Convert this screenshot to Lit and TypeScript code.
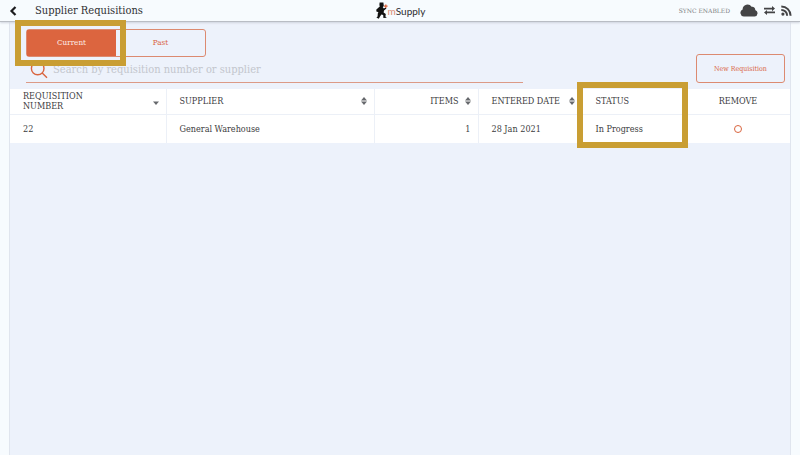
import { LitElement, html, svg, css } from "lit";
import { customElement, state } from "lit/decorators.js";

interface Column {
  key: string;
  label: string;
  sort?: "both" | "down";
}

const COLUMNS: Column[] = [
  { key: "number", label: "REQUISITION NUMBER", sort: "down" },
  { key: "supplier", label: "SUPPLIER", sort: "both" },
  { key: "items", label: "ITEMS", sort: "both" },
  { key: "entered", label: "ENTERED DATE", sort: "both" },
  { key: "status", label: "STATUS" },
  { key: "remove", label: "REMOVE" },
];

const ROWS = [
  { number: "22", supplier: "General Warehouse", items: "1", entered: "28 Jan 2021", status: "In Progress" },
];

const sortIcon = (kind: "both" | "down") => html`
  <svg class="sort-icon" viewBox="0 0 6 10" aria-hidden="true">
    ${kind === "both" ? svg`<path d="M3 1 L6 4.4 H0 Z" />` : null}
    <path d="M3 9 L6 5.6 H0 Z" />
  </svg>
`;

@customElement("app-root")
export class AppRoot extends LitElement {
  @state() private tab = "Current";

  static styles = css`
    :host {
      display: flex;
      flex-direction: column;
      min-height: 100vh;
      background: #f7fbfe;
      color: #3c3c3e;
      font-family: "DejaVu Serif Condensed", "DejaVu Serif", serif;
      font-size: 9px;
      line-height: 10px;
    }
    * {
      box-sizing: border-box;
    }
    button {
      font: inherit;
      color: inherit;
      background: none;
      border: 0;
      padding: 0;
      cursor: pointer;
    }
    svg {
      display: block;
      flex: none;
    }
    .bar {
      display: grid;
      grid-template-columns: 1fr auto 1fr;
      align-items: center;
      height: 22px;
      padding: 0 8px 0 9px;
      border-bottom: 1px solid #b9bdc4;
      box-shadow: 0 1px 2px #cfd4de;
      position: relative;
    }
    .lead,
    .brand,
    .sync {
      display: flex;
      align-items: center;
    }
    .lead {
      gap: 18px;
    }
    h1 {
      margin: 0;
      font-size: 11px;
      line-height: 14px;
      font-weight: 400;
      color: #2f3033;
    }
    .brand {
      font: 10px/12px Lato, sans-serif;
      color: #2c2c2e;
    }
    .brand-m {
      color: #d98a70;
    }
    .runner {
      width: 12px;
      height: 17px;
    }
    .sync {
      justify-content: flex-end;
      gap: 6px;
      color: #444446;
    }
    .sync-text {
      font-family: "DejaVu Serif", serif;
      font-size: 6px;
      color: #7c7e82;
      margin-right: 4px;
    }
    main {
      flex: 1;
      margin: 0 9px;
      background: #edf2fb;
      border: solid #e0e5ee;
      border-width: 0 1px;
    }
    .tools {
      display: flex;
      justify-content: space-between;
      align-items: flex-end;
      padding: 7px 5px 6px 16px;
    }
    .finder {
      flex: 0 1 497px;
    }
    .tabs {
      display: flex;
      position: relative;
      width: 180px;
      height: 28px;
      border: 1px solid #dc8a70;
      border-radius: 3px;
    }
    .tab {
      flex: 1;
      font-size: 8px;
      color: #d9653f;
    }
    .tab.on {
      background: #dc653f;
      color: #fdeee8;
    }
    .frame {
      position: absolute;
      border: 6px solid #c99e33;
      pointer-events: none;
    }
    .tab-frame {
      inset: -10px 79px -10px -12px;
    }
    .search {
      display: flex;
      align-items: center;
      gap: 5px;
      height: 26px;
      padding-left: 4px;
      border-bottom: 1px solid #dc9a86;
    }
    .search input {
      flex: 1;
      min-width: 0;
      border: 0;
      padding: 0;
      outline: 0;
      background: none;
      font: inherit;
      font-size: 11px;
      line-height: 14px;
      color: inherit;
    }
    .search input::placeholder {
      color: #c3c6cd;
      opacity: 1;
    }
    .new {
      width: 89px;
      height: 29px;
      border: 1px solid #dc8a70;
      border-radius: 3px;
      color: #d9653f;
      font-size: 7px;
    }
    .table-box {
      position: relative;
    }
    table {
      width: 100%;
      table-layout: fixed;
      border-collapse: collapse;
      background: #ffffff;
    }
    th,
    td {
      padding: 0 7px 0 13px;
      font-weight: 400;
      text-align: left;
      border-right: 1px solid #ecf0f7;
    }
    th {
      height: 25px;
      border-bottom: 1px solid #ecf0f7;
    }
    td {
      height: 29px;
    }
    .number {
      width: 20%;
    }
    .supplier {
      width: calc(100% / 7.5 * 2);
    }
    .items {
      text-align: right;
    }
    .status,
    .remove {
      border-right: 0;
    }
    .remove {
      padding: 0;
      text-align: center;
    }
    .head {
      display: flex;
      align-items: center;
      justify-content: space-between;
      width: 100%;
      text-align: left;
    }
    .items .head {
      justify-content: flex-end;
      gap: 6px;
    }
    .number .caption {
      width: 80px;
    }
    .sort-icon {
      width: 6px;
      height: 10px;
      fill: #66686c;
    }
    .status-frame {
      inset: -7px calc(100% / 7.5 - 2px) -5px calc(100% / 7.5 * 5.5 - 5px);
    }
    .remove input {
      appearance: none;
      display: block;
      width: 8px;
      height: 8px;
      margin: 0 auto;
      border: 1px solid #d9653f;
      border-radius: 50%;
    }
  `;

  render() {
    return html`
      <header class="bar">
        <div class="lead">
          <button aria-label="Back">
            <svg width="8" height="10" viewBox="0 0 8 10">
              <path d="M6.5 1 L2.5 5 L6.5 9" fill="none" stroke="#1c1c1e" stroke-width="2.2" />
            </svg>
          </button>
          <h1>Supplier Requisitions</h1>
        </div>
        <div class="brand">
          <svg class="runner" viewBox="0 0 12 17" aria-hidden="true">
            <path
              fill="#111"
              d="M3.6 .6 L7.4 .4 L7.6 2.2 L7.8 4 L6.8 5.2 L7.8 6.4 L9.8 5.4 L10.4 6.6 L8 8.6 L7.6 10.4 L9.8 12 L9.4 14.6 L10.8 15.8 L7.4 16 L7.2 13 L5.4 12.4 L4 14.4 L2.8 16.8 L.4 15.6 L1.6 14.4 L1.8 11.4 L2.4 10 L.6 9.8 L.2 7.8 L2.6 5.4 L3.8 4.6 L3.4 3 Z"
            />
            <path d="M9.8 2.4 V6 M8 4.2 H11.6" stroke="#d9653f" stroke-width="1.3" />
          </svg>
          <span><span class="brand-m">m</span>Supply</span>
        </div>
        <div class="sync">
          <span class="sync-text">SYNC ENABLED</span>
          <svg width="18" height="13" viewBox="0 0 18 13" aria-hidden="true">
            <path fill="currentColor" d="M3.8 12.6 A3.8 3.8 0 0 1 2.6 5.4 A4.9 4.9 0 0 1 11.6 2.8 A2.9 2.9 0 0 1 15.2 6 A3.4 3.4 0 0 1 14.6 12.6 Z" />
          </svg>
          <svg width="11" height="9" viewBox="0 0 11 9" aria-hidden="true">
            <path fill="currentColor" d="M0 1.8 H8 V0 L11 2.6 L8 5.2 V3.5 H0 Z M11 5.6 H3 V3.9 L0 6.4 L3 9 V7.3 H11 Z" />
          </svg>
          <svg width="11" height="11" viewBox="0 0 11 11" aria-hidden="true">
            <circle cx="1.9" cy="9.1" r="1.6" fill="currentColor" />
            <path fill="none" stroke="currentColor" stroke-width="2" d="M.3 4.9 A5.7 5.7 0 0 1 6.1 10.7 M.3 1.4 A9.3 9.3 0 0 1 9.6 10.7" />
          </svg>
        </div>
      </header>
      <main>
        <div class="tools">
          <div class="finder">
            <div class="tabs">
              ${["Current", "Past"].map(
                (name) => html`<button class="tab ${this.tab === name ? "on" : ""}" @click=${() => (this.tab = name)}>${name}</button>`
              )}
              <div class="frame tab-frame"></div>
            </div>
            <label class="search">
              <svg width="18" height="18" viewBox="0 0 18 18" aria-hidden="true">
                <path fill="none" stroke="#d9653f" stroke-width="1.4" d="M14 7.5 A6.3 6.3 0 1 1 1.4 7.5 A6.3 6.3 0 1 1 14 7.5 M12.2 12 L17 16.8" />
              </svg>
              <input type="text" aria-label="Search" placeholder="Search by requisition number or supplier" />
            </label>
          </div>
          <button class="new">New Requisition</button>
        </div>
        <div class="table-box">
          <table>
            <thead>
              <tr>
                ${COLUMNS.map(
                  (c) => html`<th class=${c.key} scope="col">
                    ${c.sort
                      ? html`<button class="head"><span class="caption">${c.label}</span>${sortIcon(c.sort)}</button>`
                      : c.label}
                  </th>`
                )}
              </tr>
            </thead>
            <tbody>
              ${ROWS.map(
                (r) => html`<tr>
                  <td class="number">${r.number}</td>
                  <td class="supplier">${r.supplier}</td>
                  <td class="items">${r.items}</td>
                  <td class="entered">${r.entered}</td>
                  <td class="status">${r.status}</td>
                  <td class="remove"><input type="checkbox" aria-label="Remove requisition ${r.number}" /></td>
                </tr>`
              )}
            </tbody>
          </table>
          <div class="frame status-frame"></div>
        </div>
      </main>
    `;
  }
}
